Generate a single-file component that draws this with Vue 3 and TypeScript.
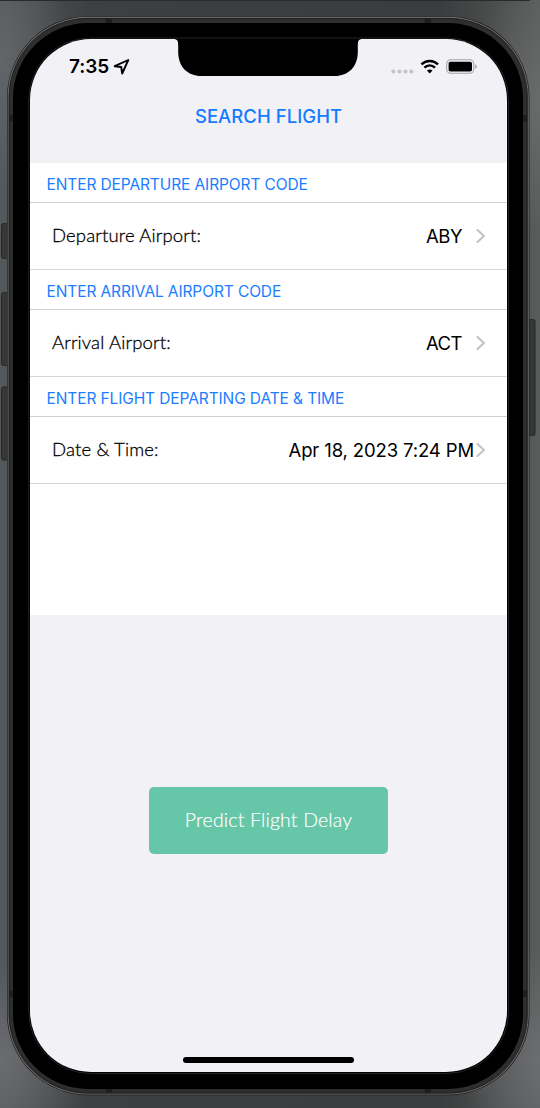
<script setup lang="ts">
interface Field {
  id: string
  heading: string
  label: string
  value: string
}

const fields: Field[] = [
  { id: 'departure', heading: 'ENTER DEPARTURE AIRPORT CODE', label: 'Departure Airport:', value: 'ABY' },
  { id: 'arrival', heading: 'ENTER ARRIVAL AIRPORT CODE', label: 'Arrival Airport:', value: 'ACT' },
  { id: 'date', heading: 'ENTER FLIGHT DEPARTING DATE & TIME', label: 'Date & Time:', value: 'Apr 18, 2023 7:24 PM' },
]
</script>

<template>
  <div class="desktop">
    <svg class="hardware" width="540" height="1108" viewBox="0 0 540 1108" aria-hidden="true">
      <path d="M0 0.500H530" stroke="#292a2b" stroke-width="1" />
      <g fill="#363838" stroke="#272828">
        <rect x="1.500" y="223.500" width="9" height="35" rx="2" />
        <rect x="1.500" y="292.500" width="9" height="73" rx="2" />
        <rect x="1.500" y="387" width="9" height="73" rx="2" />
        <rect x="526" y="319.500" width="9" height="116" rx="2" />
      </g>
      <rect x="7" y="16.200" width="522.500" height="1079" rx="81" fill="#1c1c1c" />
      <rect x="8.200" y="17.400" width="520" height="1076.600" rx="79.800" fill="#2e2e2e" stroke="#6e6d6c" stroke-width="1.100" />
      <rect x="9.200" y="18.400" width="518" height="1074.600" rx="78.800" fill="none" stroke="#1d1d1d" stroke-width="0.800" />
      <g fill="#1e1e1e">
        <path d="M105.500 19h6.500v4h-6.500zM424.500 19h6.500v4h-6.500zM105.500 1089h6.500v4h-6.500zM424.500 1089h6.500v4h-6.500z" />
        <path d="M9 115h4v6.500H9zM523 115h4v6.500h-4zM9 990.500h4v6.500H9zM523 990.500h4v6.500h-4z" />
      </g>
      <rect x="13" y="23" width="510" height="1066" rx="75" fill="#000" />
      <rect x="28.700" y="38" width="479.800" height="1035.500" rx="62" fill="none" stroke="#2c2c2c" stroke-width="0.800" />
    </svg>

    <main class="screen">
      <svg class="notch" width="190" height="38" viewBox="0 0 190 38" aria-hidden="true">
        <path d="M0 0C5 0 5.200 2.500 5.200 7V13C5.200 28 15 37 28 37H162C175 37 184.800 28 184.800 13V7C184.800 2.500 185 0 190 0Z" fill="#000" />
      </svg>

      <div class="status">
        <span class="time">7:35</span>
        <svg class="location" width="18" height="18" viewBox="0 0 18 18">
          <path d="M15.300 2L1.700 8.200L8.200 9L9.200 15.500Z" fill="none" stroke="#000" stroke-width="1.900" stroke-linejoin="round" />
        </svg>
        <svg class="indicators" width="88" height="18" viewBox="0 0 88 18">
          <g fill="#c3c2c8">
            <circle cx="3.400" cy="13.400" r="2" />
            <circle cx="9.400" cy="13.400" r="2" />
            <circle cx="15.400" cy="13.400" r="2" />
            <circle cx="21.300" cy="13.400" r="2" />
          </g>
          <g fill="none" stroke="#000" stroke-width="2.500">
            <path d="M31.400 6.400C36.100 1.800 43.300 1.800 48 6.400" />
            <path d="M34.400 9.700C37.500 6.700 41.900 6.700 45 9.700" />
          </g>
          <path d="M36.900 12.500C38.500 11.100 40.900 11.100 42.500 12.500L39.700 15.400Z" fill="#000" />
          <rect x="56.700" y="1.800" width="27.100" height="13.500" rx="4" fill="none" stroke="#a6a5a9" stroke-width="1.100" />
          <rect x="58.600" y="3.700" width="23.400" height="9.800" rx="1.800" fill="#000" />
          <path d="M85.100 6.500C87.400 7 87.400 10.200 85.100 10.700Z" fill="#a6a5a9" />
        </svg>
      </div>

      <h1 class="title">SEARCH FLIGHT</h1>

      <div class="form">
        <section v-for="field in fields" :key="field.id" class="section">
          <h2 class="heading">{{ field.heading }}</h2>
          <div class="row" :class="field.id">
            <span class="label">{{ field.label }}</span>
            <span class="value">{{ field.value }}</span>
            <svg class="chevron" width="10" height="16" viewBox="0 0 10 16">
              <path d="M1.500 2L7.900 8L1.500 14" fill="none" stroke="#c3c3c6" stroke-width="2.100" stroke-linecap="round" stroke-linejoin="round" />
            </svg>
          </div>
        </section>
      </div>

      <button class="predict" type="button">Predict Flight Delay</button>
      <div class="home"></div>
    </main>
  </div>
</template>

<style>
body {
  margin: 0;
}
</style>

<style scoped>
.desktop {
  position: relative;
  box-sizing: border-box;
  width: 540px;
  height: 1108px;
  padding: 39.400px 0 0 30px;
  overflow: hidden;
  font-family: Inter, "Liberation Sans", sans-serif;
  background:
    radial-gradient(ellipse 70px 130px at 0 60px, #65696ccc, #65696c00),
    radial-gradient(ellipse 90px 100px at 0 1060px, #707175cc, #70717500),
    radial-gradient(ellipse 80px 110px at 540px 1060px, #707175cc, #70717500),
    radial-gradient(ellipse 70px 130px at 540px 100px, #6d6e6ecc, #6d6e6e00),
    linear-gradient(90deg, #55595b 0, #3d3f41 90px, #3b3c3d 440px, #5a5c5c 540px);
}
.hardware {
  position: absolute;
  inset: 0;
}
.screen {
  position: relative;
  display: flex;
  flex-direction: column;
  width: 477px;
  height: 1033px;
  overflow: hidden;
  border-radius: 61px;
  background: #f2f1f6;
}
.notch {
  position: absolute;
  top: 0;
  left: 143.300px;
}
.status {
  display: flex;
  align-items: center;
  height: 54.600px;
  box-sizing: border-box;
  padding: 0 29.500px 0 39px;
}
.time {
  font-size: 19px;
  font-weight: 570;
  letter-spacing: -0.100px;
}
.location {
  margin-left: 3.500px;
}
.indicators {
  margin-left: auto;
}
.title {
  margin: 0;
  height: 69px;
  line-height: 45px;
  text-align: center;
  font-size: 18.500px;
  font-weight: 550;
  letter-spacing: 0.050px;
  color: #157bff;
}
.form {
  height: 452px;
  background: #fff;
}
.section {
  height: 107px;
}
.heading {
  box-sizing: border-box;
  height: 40px;
  margin: 0;
  padding-left: 16.500px;
  border-bottom: 1px solid #cfcfd1;
  line-height: 43px;
  font-size: 15.500px;
  font-weight: 370;
  letter-spacing: -0.110px;
  color: #1b7dff;
  white-space: nowrap;
}
.row {
  box-sizing: border-box;
  display: flex;
  align-items: center;
  height: 67px;
  padding: 0 21.500px 0 22px;
  border-bottom: 1px solid #d8d8d9;
  color: #000;
}
.label {
  padding-bottom: 1.500px;
  font-family: Lato, sans-serif;
  font-size: 18.500px;
  font-weight: 300;
  letter-spacing: 0.150px;
  -webkit-text-stroke: 0.300px #000;
}
.value {
  margin-left: auto;
  margin-right: 13.500px;
  font-size: 18.500px;
  font-weight: 380;
  letter-spacing: -0.500px;
}
.row.date .value {
  margin-right: 1.500px;
  letter-spacing: -0.130px;
}
.predict {
  align-self: center;
  width: 239px;
  height: 67px;
  margin-top: 172px;
  padding: 0 0 2px;
  border: 0;
  border-radius: 5px;
  background: #65c6a8;
  color: #fff;
  font-family: Lato, sans-serif;
  font-size: 19.500px;
  font-weight: 300;
  letter-spacing: 0.170px;
  -webkit-text-stroke: 0.200px #fff;
}
.home {
  align-self: center;
  width: 171px;
  height: 5.500px;
  margin-top: auto;
  margin-bottom: 9.500px;
  border-radius: 3px;
  background: #000;
}
</style>
